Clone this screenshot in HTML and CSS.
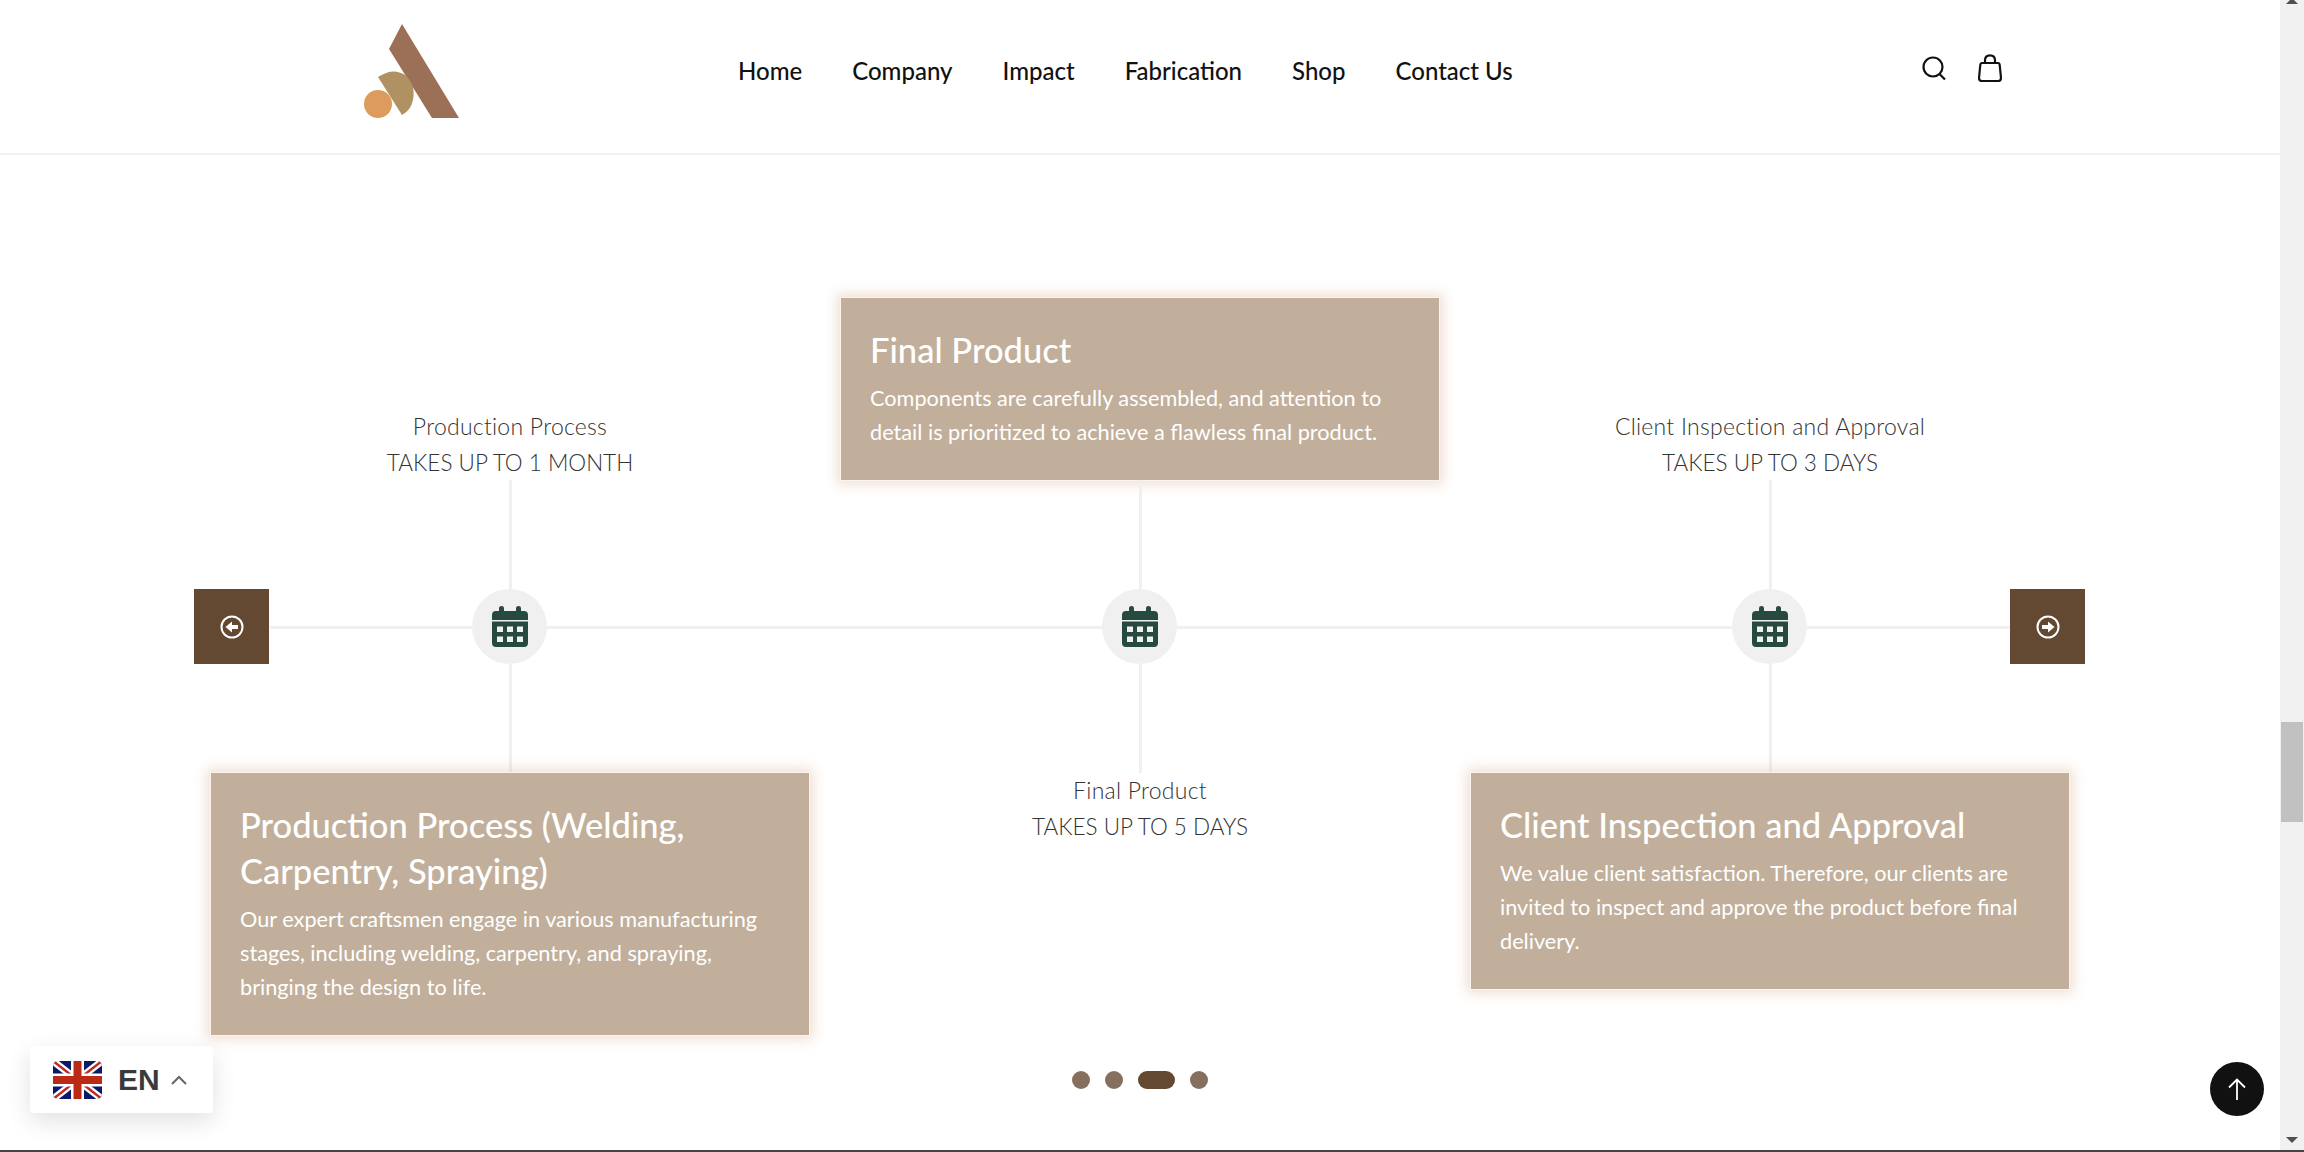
FILE: index.html
```html
<!DOCTYPE html>
<html lang="en">

<head>
    <meta charset="UTF-8">
    <meta name="viewport" content="width=device-width, initial-scale=1.0">
    <title>Fabrication</title>
    <link rel="stylesheet" href="styles.css">
</head>

<body>
    <div class="page">
        <header class="header">
            <a class="logo" href="#">
                <svg width="96" height="96" viewBox="0 0 96 96">
                    <path d="M38 0 L95 94 L68 94 L25 25 Z" fill="#9c7056" />
                    <path d="M14 53 Q29 43 41 51 Q52 60 49 76 Q47 86 38 91 Z" fill="#b09162" />
                    <circle cx="14" cy="80" r="14" fill="#dd9c5e" />
                </svg>
            </a>
            <nav class="nav">
                <a href="#">Home</a>
                <a href="#">Company</a>
                <a href="#">Impact</a>
                <a href="#">Fabrication</a>
                <a href="#">Shop</a>
                <a href="#">Contact Us</a>
            </nav>
            <div class="header-icons">
                <svg width="26" height="28" viewBox="0 0 26 28" fill="none" stroke="#111" stroke-width="2.200">
                    <circle cx="11" cy="13" r="9.500" />
                    <path d="M17.500 20 L23 25.500" />
                </svg>
                <svg width="24" height="28" viewBox="0 0 24 28" fill="none" stroke="#111" stroke-width="2.200" stroke-linejoin="round">
                    <path d="M4 9 H20 Q21.500 9 21.700 11 L23 24 Q23 27 20 27 H4 Q1 27 1 24 L2.300 11 Q2.500 9 4 9 Z" />
                    <path d="M7 9 V6.500 Q7 1.300 12 1.300 Q17 1.300 17 6.500 V9" />
                </svg>
            </div>
        </header>

        <main class="timeline-section">
            <div class="timeline">
                <div class="step">
                    <div class="slot slot-top">
                        <p class="label"><span class="label-name">Production Process</span><br>TAKES UP TO 1 MONTH</p>
                    </div>
                    <div class="stem"></div>
                    <div class="step-icon">
                        <svg class="cal" width="36" height="41" viewBox="0 0 36 41">
                            <path d="M7 2 Q7 0 9.500 0 Q12 0 12 2 V5 H24 V2 Q24 0 26.500 0 Q29 0 29 2 V5 H32 Q36 5 36 9 V14 H0 V9 Q0 5 4 5 H7 Z" />
                            <path fill-rule="evenodd" d="M0 15.500 H36 V37 Q36 41 32 41 H4 Q0 41 0 37 Z M5 20.500 V26 H11 V20.500 Z M15 20.500 V26 H21 V20.500 Z M25 20.500 V26 H31 V20.500 Z M5 30.500 V36 H11 V30.500 Z M15 30.500 V36 H21 V30.500 Z M25 30.500 V36 H31 V30.500 Z" />
                        </svg>
                    </div>
                    <div class="stem"></div>
                    <div class="slot">
                        <div class="card">
                            <h3>Production Process (Welding, Carpentry, Spraying)</h3>
                            <p>Our expert craftsmen engage in various manufacturing stages, including welding, carpentry, and spraying, bringing the design to life.</p>
                        </div>
                    </div>
                </div>

                <div class="step">
                    <div class="slot slot-top">
                        <div class="card">
                            <h3>Final Product</h3>
                            <p>Components are carefully assembled, and attention to detail is prioritized to achieve a flawless final product.</p>
                        </div>
                    </div>
                    <div class="stem"></div>
                    <div class="step-icon">
                        <svg class="cal" width="36" height="41" viewBox="0 0 36 41">
                            <path d="M7 2 Q7 0 9.500 0 Q12 0 12 2 V5 H24 V2 Q24 0 26.500 0 Q29 0 29 2 V5 H32 Q36 5 36 9 V14 H0 V9 Q0 5 4 5 H7 Z" />
                            <path fill-rule="evenodd" d="M0 15.500 H36 V37 Q36 41 32 41 H4 Q0 41 0 37 Z M5 20.500 V26 H11 V20.500 Z M15 20.500 V26 H21 V20.500 Z M25 20.500 V26 H31 V20.500 Z M5 30.500 V36 H11 V30.500 Z M15 30.500 V36 H21 V30.500 Z M25 30.500 V36 H31 V30.500 Z" />
                        </svg>
                    </div>
                    <div class="stem"></div>
                    <div class="slot">
                        <p class="label label-below"><span class="label-name">Final Product</span><br>TAKES UP TO 5 DAYS</p>
                    </div>
                </div>

                <div class="step">
                    <div class="slot slot-top">
                        <p class="label"><span class="label-name">Client Inspection and Approval</span><br>TAKES UP TO 3 DAYS</p>
                    </div>
                    <div class="stem"></div>
                    <div class="step-icon">
                        <svg class="cal" width="36" height="41" viewBox="0 0 36 41">
                            <path d="M7 2 Q7 0 9.500 0 Q12 0 12 2 V5 H24 V2 Q24 0 26.500 0 Q29 0 29 2 V5 H32 Q36 5 36 9 V14 H0 V9 Q0 5 4 5 H7 Z" />
                            <path fill-rule="evenodd" d="M0 15.500 H36 V37 Q36 41 32 41 H4 Q0 41 0 37 Z M5 20.500 V26 H11 V20.500 Z M15 20.500 V26 H21 V20.500 Z M25 20.500 V26 H31 V20.500 Z M5 30.500 V36 H11 V30.500 Z M15 30.500 V36 H21 V30.500 Z M25 30.500 V36 H31 V30.500 Z" />
                        </svg>
                    </div>
                    <div class="stem"></div>
                    <div class="slot">
                        <div class="card">
                            <h3>Client Inspection and Approval</h3>
                            <p>We value client satisfaction. Therefore, our clients are invited to inspect and approve the product before final delivery.</p>
                        </div>
                    </div>
                </div>

                <button class="arrow arrow-prev">
                    <svg width="24" height="24" viewBox="0 0 24 24">
                        <circle cx="12" cy="12" r="10.500" fill="none" stroke="#fff" stroke-width="2" />
                        <path d="M5.500 12 L12 6.500 V10 H18 V14 H12 V17.500 Z" fill="#fff" />
                    </svg>
                </button>
                <button class="arrow arrow-next">
                    <svg width="24" height="24" viewBox="0 0 24 24">
                        <circle cx="12" cy="12" r="10.500" fill="none" stroke="#fff" stroke-width="2" />
                        <path d="M18.500 12 L12 6.500 V10 H6 V14 H12 V17.500 Z" fill="#fff" />
                    </svg>
                </button>
            </div>

            <div class="dots">
                <span class="dot"></span>
                <span class="dot"></span>
                <span class="dot active"></span>
                <span class="dot"></span>
            </div>
        </main>

        <div class="lang">
            <svg class="flag" width="49" height="38" viewBox="0 0 49 38">
                <defs>
                    <clipPath id="flag-clip">
                        <rect width="49" height="38" rx="5" />
                    </clipPath>
                </defs>
                <g clip-path="url(#flag-clip)">
                    <rect width="49" height="38" fill="#0a1a6b" />
                    <path d="M0 0 L49 38 M49 0 L0 38" stroke="#fff" stroke-width="7" />
                    <path d="M0 0 L49 38 M49 0 L0 38" stroke="#c12a1c" stroke-width="2.500" />
                    <path d="M24.500 0 V38 M0 19 H49" stroke="#fff" stroke-width="13" />
                    <path d="M24.500 0 V38 M0 19 H49" stroke="#bb2a14" stroke-width="8" />
                </g>
            </svg>
            <span class="lang-code">EN</span>
            <svg width="16" height="10" viewBox="0 0 16 10" fill="none" stroke="#666" stroke-width="2">
                <path d="M1 9 L8 2 L15 9" />
            </svg>
        </div>

        <a class="to-top" href="#">
            <svg width="18" height="22" viewBox="0 0 18 22" fill="none" stroke="#fff" stroke-width="1.800">
                <path d="M9 22 V2 M1 9.500 L9 1.500 L17 9.500" />
            </svg>
        </a>
    </div>

    <div class="scrollbar">
        <span class="scroll-up"></span>
        <span class="scroll-thumb"></span>
        <span class="scroll-down"></span>
    </div>
    <div class="window-edge"></div>
</body>

</html>
```

FILE: styles.css
```css
* {
    margin: 0;
    padding: 0;
    box-sizing: border-box;
}

html,
body {
    height: 100%;
    overflow: hidden;
}

body {
    display: flex;
    background-color: #fff;
    font-family: "Lato", "Liberation Sans", sans-serif;
    color: #444;
}

a {
    color: inherit;
    text-decoration: none;
}

.page {
    flex: 1;
    position: relative;
    height: 100%;
}

/* header */
.header {
    height: 155px;
    display: flex;
    align-items: flex-start;
    padding-left: 364px;
    padding-right: 278px;
    border-bottom: 2px solid #f2f2f2;
}

.logo {
    display: block;
    width: 96px;
    height: 96px;
    margin-top: 24px;
}

.nav {
    display: flex;
    gap: 50px;
    margin-left: 278px;
    margin-top: 55px;
    font-size: 24px;
    line-height: 32px;
    font-weight: 500;
    color: #111;
}

.header-icons {
    margin-left: auto;
    margin-top: 54px;
    display: flex;
    align-items: center;
    gap: 30px;
}

/* timeline */
.timeline-section {
    padding-top: 143px;
}

.timeline {
    position: relative;
    width: 1890px;
    margin: 0 auto;
    display: grid;
    grid-template-columns: repeat(3, 630px);
}

.timeline::before {
    content: "";
    position: absolute;
    left: 75px;
    right: 75px;
    top: 328px;
    height: 3px;
    background-color: #f0f0f0;
}

.step {
    position: relative;
    display: flex;
    flex-direction: column;
    align-items: center;
}

.slot {
    width: 600px;
}

.slot-top {
    height: 182px;
    display: flex;
    flex-direction: column;
    justify-content: flex-end;
}

.stem {
    width: 3px;
    height: 109px;
    background-color: #f0f0f0;
}

.step-icon {
    width: 75px;
    height: 75px;
    margin-left: -1px;
    padding-left: 1px;
    border-radius: 50%;
    background-color: #f0f0f0;
    display: flex;
    align-items: center;
    justify-content: center;
}

.cal {
    fill: #264a3f;
}

.label {
    font-size: 22.500px;
    line-height: 36px;
    font-weight: 300;
    text-align: center;
    color: #333;
}

.slot-top .label {
    margin-bottom: -1px;
}

.label-below {
    margin-top: -1px;
}

.label-name {
    font-size: 23px;
    letter-spacing: 0.25px;
}

.card {
    margin: 0 1px;
    background-color: #c1af9b;
    padding: 29px 29px 31px;
    color: #fff;
    box-shadow: 0 0 0 1px #fbf3ec, 0 0 12px 4px rgba(214, 170, 140, 0.4);
}

.card h3 {
    font-size: 34.500px;
    line-height: 46px;
    font-weight: 500;
    margin-bottom: 8px;
}

.card p {
    font-size: 21.700px;
    line-height: 34px;
    font-weight: 400;
}

.arrow {
    position: absolute;
    top: 291px;
    width: 75px;
    height: 75px;
    border: none;
    background-color: #634832;
    display: flex;
    align-items: center;
    justify-content: center;
}

.arrow-prev {
    left: -1px;
}

.arrow-next {
    right: 0;
}

/* slider dots */
.dots {
    display: flex;
    justify-content: center;
    align-items: center;
    gap: 15px;
    margin-top: 36px;
}

.dot {
    width: 18px;
    height: 18px;
    border-radius: 9px;
    background-color: #86705d;
}

.dot.active {
    width: 37px;
    background-color: #634832;
}

/* floating widgets */
.lang {
    position: absolute;
    left: 30px;
    top: 1046px;
    width: 183px;
    height: 67px;
    background-color: #fff;
    border-radius: 3px;
    box-shadow: 0 8px 24px rgba(0, 0, 0, 0.12);
    display: flex;
    align-items: center;
    padding-left: 23px;
}

.lang-code {
    margin-left: 16px;
    margin-right: 11px;
    font-family: "Liberation Sans", sans-serif;
    font-size: 30px;
    font-weight: 700;
    color: #3a3a3a;
}

.to-top {
    position: absolute;
    left: 2210px;
    top: 1062px;
    width: 54px;
    height: 54px;
    border-radius: 50%;
    background-color: #111;
    display: flex;
    align-items: center;
    justify-content: center;
}

/* fake browser scrollbar */
.scrollbar {
    position: relative;
    width: 24px;
    height: 100%;
    background-color: #f1f1f1;
}

.scroll-thumb {
    position: absolute;
    left: 1px;
    right: 1px;
    top: 722px;
    height: 100px;
    background-color: #c1c1c1;
}

.scroll-up,
.scroll-down {
    position: absolute;
    left: 6px;
    width: 0;
    height: 0;
    border-left: 6px solid transparent;
    border-right: 6px solid transparent;
}

.scroll-up {
    top: -2px;
    border-bottom: 6px solid #505050;
}

.scroll-down {
    bottom: 9px;
    border-top: 6px solid #505050;
}

.window-edge {
    position: fixed;
    left: 0;
    right: 0;
    bottom: 0;
    height: 2px;
    background-color: #444;
}
```
